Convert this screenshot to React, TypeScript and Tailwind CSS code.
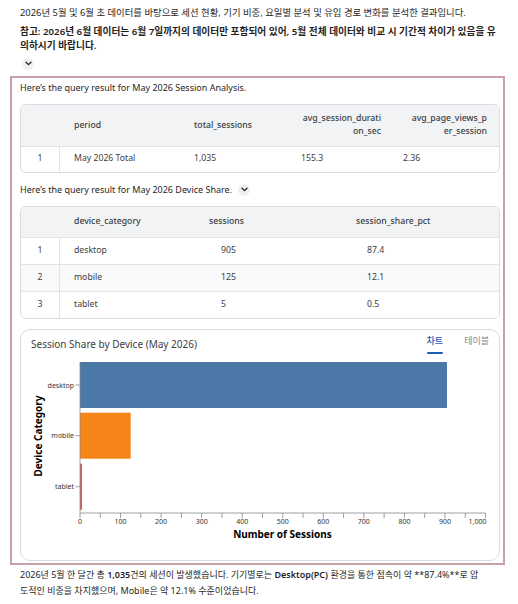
import React from 'react';

const font = "font-['Noto_Sans','Noto_Sans_CJK_KR',sans-serif]";

function Chevron({ className = '' }: { className?: string }) {
  return (
    <span className={`inline-flex items-center justify-center w-[12px] h-[12px] rounded-full bg-[#eef0f2] ${className}`}>
      <svg width="7" height="5" viewBox="0 0 7 5">
        <path d="M1 1.2 L3.5 3.6 L6 1.2" fill="none" stroke="#1f1f1f" strokeWidth="1.3" strokeLinecap="round" strokeLinejoin="round" />
      </svg>
    </span>
  );
}

const devices = [
  { id: 1, name: 'desktop', sessions: '905', pct: '87.4' },
  { id: 2, name: 'mobile', sessions: '125', pct: '12.1' },
  { id: 3, name: 'tablet', sessions: '5', pct: '0.5' },
];

function SessionTable() {
  return (
    <div className="w-[480px] rounded-[6px] border border-[#dadce0] overflow-hidden text-[8.7px] text-[#3c4043]">
      <div className="grid grid-cols-[39px_120px_107px_104px_110px] h-[41px] bg-[#f1f3f4] font-medium items-center leading-[13px]">
        <div />
        <div className="pl-[14px]">period</div>
        <div className="pl-[14px]">total_sessions</div>
        <div className="text-right pr-[10px]">avg_session_durati<br />on_sec</div>
        <div className="text-right pr-[14px]">avg_page_views_p<br />er_session</div>
      </div>
      <div className="grid grid-cols-[39px_120px_107px_104px_110px] h-[26px] items-center border-t border-[#e3e3e3]">
        <div className="text-center h-full flex items-center justify-center border-r border-[#e3e3e3]">1</div>
        <div className="pl-[14px]">May 2026 Total</div>
        <div className="pl-[14px]">1,035</div>
        <div className="pl-[14px]">155.3</div>
        <div className="pl-[12px]">2.36</div>
      </div>
    </div>
  );
}

function DeviceTable() {
  return (
    <div className="w-[480px] rounded-[6px] border border-[#dadce0] overflow-hidden text-[8.7px] text-[#3c4043]">
      <div className="grid grid-cols-[39px_136px_145px_160px] h-[30px] bg-[#f1f3f4] font-medium items-center">
        <div />
        <div className="pl-[14px]">device_category</div>
        <div className="pl-[13px]">sessions</div>
        <div className="pl-[15px]">session_share_pct</div>
      </div>
      {devices.map((d) => (
        <div
          key={d.id}
          className={`grid grid-cols-[39px_136px_145px_160px] h-[27px] items-center border-t border-[#e3e3e3] ${d.id === 2 ? 'bg-[#f8f9fa]' : 'bg-white'}`}
        >
          <div className="text-center h-full flex items-center justify-center border-r border-[#e3e3e3]">{d.id}</div>
          <div className="pl-[14px]">{d.name}</div>
          <div className="pl-[25px]">{d.sessions}</div>
          <div className="pl-[26px]">{d.pct}</div>
        </div>
      ))}
    </div>
  );
}

function BarChart() {
  const x = (v: number) => 59 + v * 0.4055;
  const ticks = Array.from({ length: 21 }, (_, i) => i * 50);
  const labels = [0, 100, 200, 300, 400, 500, 600, 700, 800, 900];
  const bars = [
    { name: 'desktop', v: 905, y: 7, color: '#4c78a8' },
    { name: 'mobile', v: 125, y: 57.7, color: '#f58518' },
    { name: 'tablet', v: 5, y: 108.7, color: '#e45756' },
  ];
  return (
    <svg width="478" height="204" className="block">
      {bars.map((b) => (
        <g key={b.name}>
          <rect x={59} y={b.y} width={Math.max(x(b.v) - 59, 1.5)} height={46} fill={b.color} />
          <line x1={54.5} x2={59} y1={b.y + 23} y2={b.y + 23} stroke="#888" strokeWidth="0.8" />
          <text x={53} y={b.y + 25.5} textAnchor="end" fontSize="7" fill="#333" fontFamily="Noto Sans, sans-serif">{b.name}</text>
        </g>
      ))}
      <line x1={59} x2={59} y1={7} y2={158} stroke="#888" strokeWidth="0.8" />
      <line x1={59} x2={x(1000)} y1={158} y2={158} stroke="#888" strokeWidth="0.8" />
      {ticks.map((t) => (
        <line key={t} x1={x(t)} x2={x(t)} y1={158} y2={163} stroke="#888" strokeWidth="0.8" />
      ))}
      {labels.map((t) => (
        <text key={t} x={x(t)} y={168.5} textAnchor="middle" fontSize="7" fill="#333" fontFamily="Noto Sans, sans-serif">{t}</text>
      ))}
      <text x={x(1000) + 1} y={168.5} textAnchor="end" fontSize="7" fill="#333" fontFamily="Noto Sans, sans-serif">1,000</text>
      <text x={261.5} y={182.5} textAnchor="middle" fontSize="10" fontWeight="bold" fill="#000" fontFamily="Noto Sans, sans-serif">Number of Sessions</text>
      <text x={0} y={0} transform="translate(20.5 81) rotate(-90)" textAnchor="middle" fontSize="10" fontWeight="bold" fill="#000" fontFamily="Noto Sans, sans-serif">Device Category</text>
    </svg>
  );
}

export default function App() {
  return (
    <div className={`w-[518px] h-[604px] bg-white overflow-hidden text-[#1f1f1f] ${font}`}>
      {/* Intro */}
      <div className="pl-[20px] pt-[6px] leading-[14px]">
        <p className="text-[9.4px]">2026년 5월 및 6월 초 데이터를 바탕으로 세션 현황, 기기 비중, 요일별 분석 및 유입 경로 변화를 분석한 결과입니다.</p>
        <p className="mt-[5px] text-[9.7px] font-semibold">
          참고: 2026년 6월 데이터는 6월 7일까지의 데이터만 포함되어 있어, 5월 전체 데이터와 비교 시 기간적 차이가 있음을 유<br />
          의하시기 바랍니다.
        </p>
        <Chevron className="flex -mt-[2px] ml-[2px]" />
      </div>

      {/* Highlighted results */}
      <div className="mt-[6px] ml-[10px] w-[495px] h-[489px] border-2 border-[#c9a0a6] pl-[8px] pt-[3px]">
        <p className="text-[9px] leading-[14px] text-[#1f1f1f]">Here&#8217;s the query result for May 2026 Session Analysis.</p>
        <div className="mt-[9px]">
          <SessionTable />
        </div>
        <div className="mt-[10px] flex items-center gap-[6px] text-[9px] leading-[14px]">
          <span>Here&#8217;s the query result for May 2026 Device Share.</span>
          <Chevron />
        </div>
        <div className="mt-[9px]">
          <DeviceTable />
        </div>
        <div className="mt-[10px] w-[480px] h-[232px] rounded-[10px] border border-[#dadce0] bg-white">
          <div className="h-[25px] flex items-start justify-between">
            <div className="pl-[10px] pt-[7px] text-[10px] leading-[14px] text-[#3c4043]">Session Share by Device (May 2026)</div>
            <div className="flex gap-[21px] pr-[10px] pt-[4px] text-[9px] leading-[14px]">
              <div className="flex flex-col items-center">
                <span className="text-[#1a5fb4] font-medium">차트</span>
                <span className="mt-[4px] w-[16px] h-[2px] rounded-full bg-[#1a5fb4]" />
              </div>
              <span className="text-[#80868b]">테이블</span>
            </div>
          </div>
          <BarChart />
        </div>
      </div>

      {/* Summary */}
      <div className="pl-[20px] pt-[2px] text-[9px] leading-[16px]">
        2026년 5월 한 달간 총 <b className="font-semibold">1,035</b>건의 세션이 발생했습니다. 기기별로는 <b className="font-semibold">Desktop(PC)</b> 환경을 통한 접속이 약 **87.4%**로 압<br />
        도적인 비중을 차지했으며, Mobile은 약 12.1% 수준이었습니다.
      </div>
    </div>
  );
}
